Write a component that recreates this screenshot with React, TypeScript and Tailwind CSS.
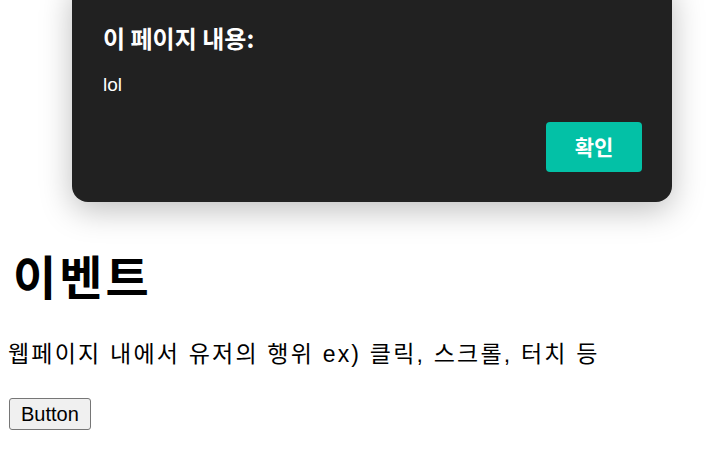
export default function App() {
  return (
    <div className="relative w-[706px] h-[457px] overflow-hidden bg-white text-black font-['Liberation_Sans','Noto_Sans_CJK_KR',sans-serif]">
      {/* === Page content === */}
      <div className="flex flex-col items-start px-[8px] pt-[251px]">
        <h1 className="pl-[5px] text-[47px] leading-[56px] font-bold tracking-[3px]">이벤트</h1>
        <p className="mt-[31px] text-[23px] leading-[32px] tracking-[2.2px]">
          웹페이지 내에서 유저의 행위 ex) 클릭, 스크롤, 터치 등
        </p>
        <button className="ml-[1px] mt-[28px] h-[32px] px-[11px] text-[20px] leading-none bg-[#f0f0f0] border border-[#767676] rounded-[3px]">
          Button
        </button>
      </div>

      {/* === Alert dialog === */}
      <div className="absolute left-[72px] top-[-20px] w-[600px] h-[222px] rounded-[16px] bg-[#212121] shadow-[0_8px_32px_rgba(0,0,0,0.26)] text-white font-['Noto_Sans_CJK_KR','Liberation_Sans',sans-serif] flex flex-col pl-[31px] pr-[30px] pt-[44px]">
        <div className="text-[24px] leading-[28px] font-bold">이 페이지 내용:</div>
        <div className="mt-[21px] text-[19px] leading-[24px] font-['Liberation_Sans',sans-serif]">lol</div>
        <div className="flex justify-end mt-[25px]">
          <button className="w-[96px] h-[50px] rounded-[4px] bg-[#03c1a6] text-white text-[21px] font-bold">
            확인
          </button>
        </div>
      </div>
    </div>
  );
}
